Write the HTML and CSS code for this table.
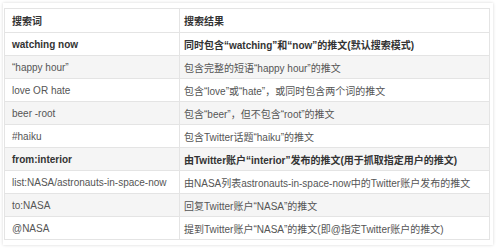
FILE: index.html
```html
<!DOCTYPE html>
<html lang="zh">
<head>
<meta charset="utf-8">
<link rel="stylesheet" href="styles.css">
</head>
<body>
<div class="card">
<table class="ops">
<colgroup><col class="c1"><col class="c2"></colgroup>
<tr class="head"><td>搜索词</td><td>搜索结果</td></tr>
<tr class="b"><td>watching now</td><td>同时包含“watching”和“now”的推文(默认搜索模式)</td></tr>
<tr class="alt"><td>“happy hour”</td><td>包含完整的短语“happy hour”的推文</td></tr>
<tr><td>love OR hate</td><td>包含“love”或“hate”，或同时包含两个词的推文</td></tr>
<tr class="alt"><td>beer -root</td><td>包含“beer”，但不包含“root”的推文</td></tr>
<tr><td>#haiku</td><td>包含Twitter话题“haiku”的推文</td></tr>
<tr class="alt b"><td>from:interior</td><td>由Twitter账户“interior”发布的推文(用于抓取指定用户的推文)</td></tr>
<tr><td>list:NASA/astronauts-in-space-now</td><td>由NASA列表astronauts-in-space-now中的Twitter账户发布的推文</td></tr>
<tr class="alt"><td>to:NASA</td><td>回复Twitter账户“NASA”的推文</td></tr>
<tr><td>@NASA</td><td>提到Twitter账户“NASA”的推文(即@指定Twitter账户的推文)</td></tr>
</table>
</div>
</body>
</html>
```
FILE: styles.css
```css
html, body { margin: 0; padding: 0; background: #fff; }
body { width: 500px; height: 251px; overflow: hidden; padding-top: 3px; box-sizing: border-box; }
.card {
  width: 490px;
  margin-left: 3px;
  padding: 5px 0 5px 1px;
  box-sizing: border-box;
  box-shadow: 0 0 3px rgba(0,0,0,0.16);
  background: #fff;
}
.ops {
  border-collapse: collapse;
  table-layout: fixed;
  width: 485px;
  font-family: "Liberation Sans", "Noto Sans CJK SC", sans-serif;
  font-size: 10px;
  color: #555;
  border: 1px solid #e2e2e2;
}
.c1 { width: 175px; }
.c2 { width: 310px; }
.ops td {
  height: 22px;
  padding: 0 4px;
  border: 1px solid #e4e4e4;
  vertical-align: middle;
  white-space: nowrap;
  overflow: hidden;
}
.ops td:first-child { padding-left: 7px; }
.ops tr.head td { height: 23px; color: #333; font-weight: bold; }
.ops tr.alt td { background: #f5f5f5; }
.ops tr.b td { font-weight: bold; color: #333; }
```
